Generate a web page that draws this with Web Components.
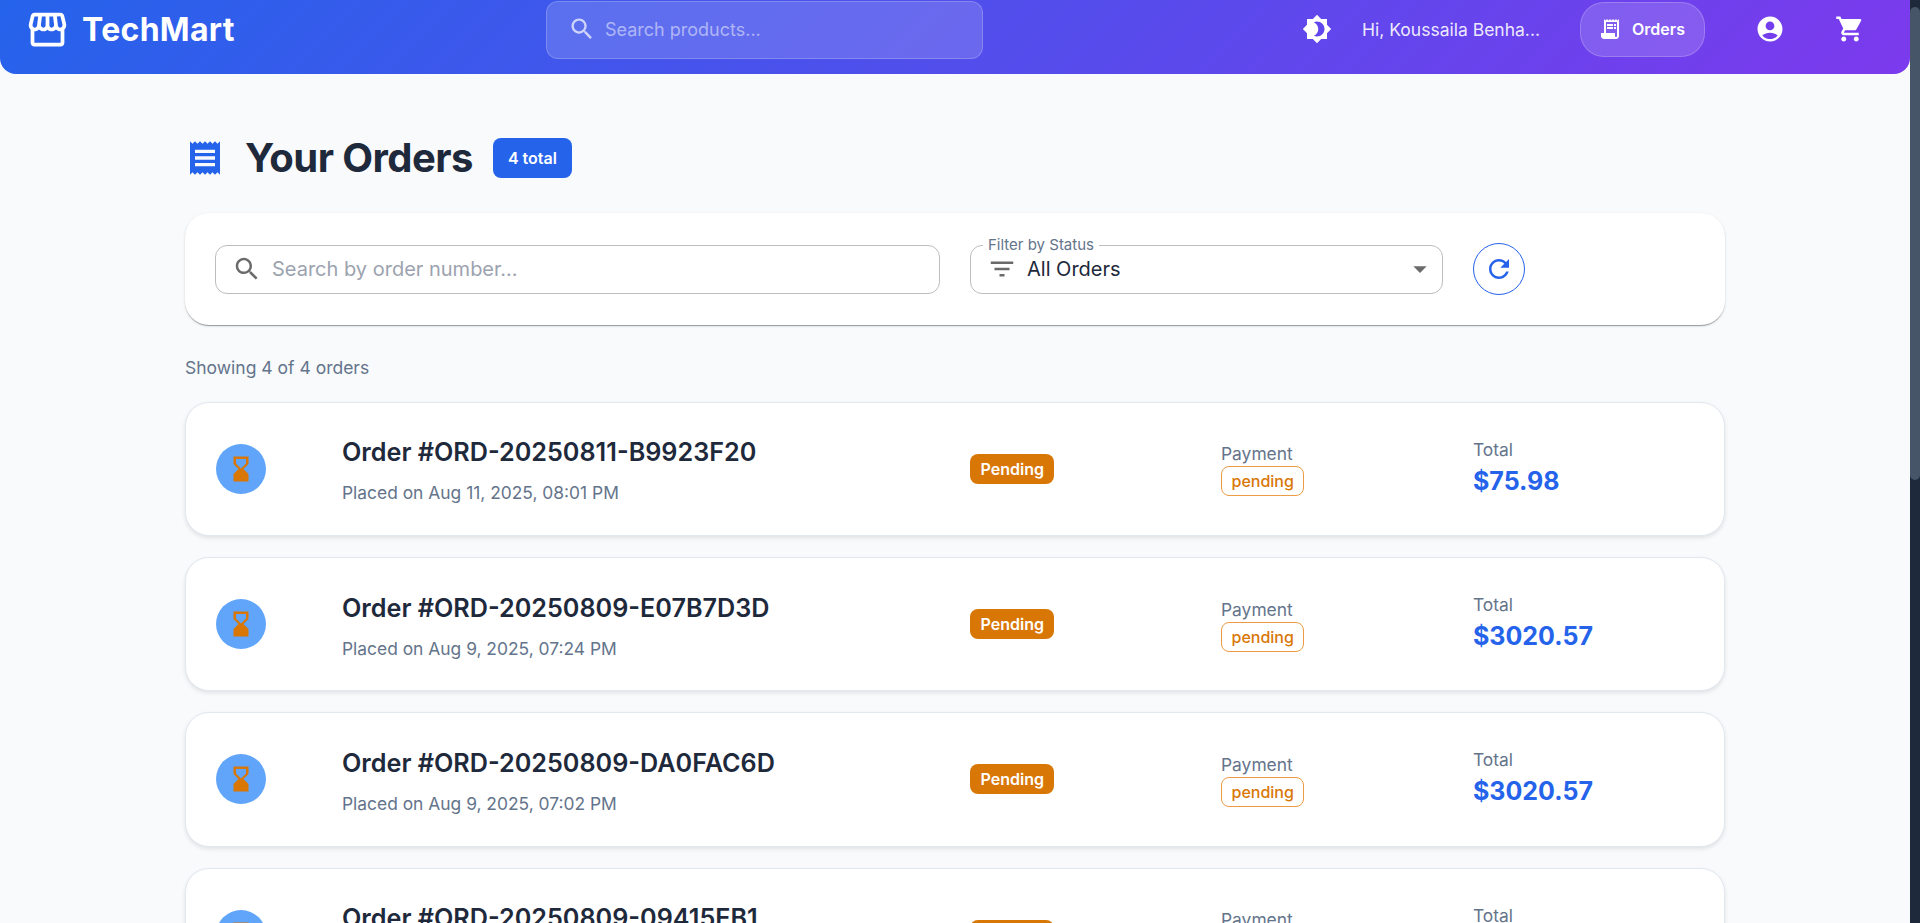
<!DOCTYPE html>
<html>
<head>
<meta charset="utf-8">
<title>TechMart</title>
<style>
  html, body { margin: 0; height: 100%; overflow: hidden; }
  body { display: flex; background: #f8fafc; font-family: Inter, "Liberation Sans", sans-serif; color: #1e293b; }
</style>
</head>
<body>
<app-page>
  <app-navbar></app-navbar>
  <orders-view>
    <order-row number="ORD-20250811-B9923F20" placed="Aug 11, 2025, 08:01 PM" total="$75.98"></order-row>
    <order-row number="ORD-20250809-E07B7D3D" placed="Aug 9, 2025, 07:24 PM" total="$3020.57"></order-row>
    <order-row number="ORD-20250809-DA0FAC6D" placed="Aug 9, 2025, 07:02 PM" total="$3020.57"></order-row>
    <order-row number="ORD-20250809-09415EB1" placed="Aug 9, 2025, 06:48 PM" total="$3020.57"></order-row>
  </orders-view>
</app-page>
<page-scrollbar></page-scrollbar>

<script>
class AppPage extends HTMLElement {
  constructor() {
    super();
    this.attachShadow({ mode: "open" });
    this.shadowRoot.innerHTML = `
      <style>
        :host { display: flex; flex-direction: column; flex: 1; min-width: 0; height: 100%; overflow: hidden; }
      </style>
      <slot></slot>
    `;
  }
}

class PageScrollbar extends HTMLElement {
  constructor() {
    super();
    this.attachShadow({ mode: "open" });
    this.shadowRoot.innerHTML = `
      <style>
        :host { display: block; width: 10px; height: 100%; background: #1e293b; flex: none; }
        .thumb { height: 473px; margin-top: 7px; background: #475569; border-radius: 5px; }
      </style>
      <div class="thumb"></div>
    `;
  }
}

class AppNavbar extends HTMLElement {
  constructor() {
    super();
    this.attachShadow({ mode: "open" });
    this.shadowRoot.innerHTML = `
      <style>
        :host {
          display: flex;
          align-items: center;
          flex: none;
          height: 74px;
          box-sizing: border-box;
          padding: 0 45px 16px 25px;
          color: #fff;
          background: linear-gradient(135deg, #2563eb 0%, #7c3aed 100%);
          border-radius: 0 0 16px 16px;
        }
        .brand { display: flex; align-items: center; gap: 12px; width: 521px; flex: none; }
        .brand span { font-size: 32px; font-weight: 700; letter-spacing: .3px; }
        .search {
          display: flex; align-items: center; gap: 9px;
          width: 437px; height: 58px; box-sizing: border-box;
          margin-top: 2px; padding: 0 14px 2px 21px; flex: none;
          background: rgba(255,255,255,.15);
          border: 1px solid rgba(255,255,255,.2);
          border-radius: 12px;
          color: rgba(255,255,255,.5);
          font-size: 18px;
        }
        .search svg { flex: none; color: rgba(255,255,255,.7); }
        .right { display: flex; align-items: center; margin-left: auto; }
        .theme { margin-right: 30px; }
        .hi { font-size: 17.5px; color: rgba(255,255,255,.9); margin-right: 40px; white-space: nowrap; }
        .orders {
          display: flex; align-items: center; gap: 10px;
          width: 125px; height: 55px; box-sizing: border-box;
          justify-content: center; padding-right: 2px;
          background: rgba(255,255,255,.15);
          border: 1px solid rgba(255,255,255,.2);
          border-radius: 24px;
          font-size: 16px; font-weight: 600;
          margin-right: 50px;
        }
        .user { margin-right: 50px; }
        svg { display: block; fill: currentColor; }
      </style>
      <div class="brand">
        <svg width="45" height="45" viewBox="0 0 24 24"><path d="M21.9 8.89l-1.05-4.37c-.22-.9-1-1.52-1.91-1.52H5.05c-.9 0-1.69.63-1.9 1.52L2.1 8.89c-.24 1.02-.02 2.06.62 2.88.08.11.19.19.28.29V19c0 1.1.9 2 2 2h14c1.1 0 2-.9 2-2v-6.94c.09-.09.2-.18.28-.28.64-.82.87-1.87.62-2.89zm-2.99-3.9l1.05 4.37c.1.42.01.84-.25 1.17-.14.18-.44.47-.94.47-.61 0-1.14-.49-1.21-1.14L16.98 5l1.93-.01zM13 5h1.96l.54 4.52c.05.39-.07.78-.33 1.07-.22.26-.54.41-.95.41-.67 0-1.22-.59-1.22-1.31V5zM8.49 9.52L9.04 5H11v4.69c0 .72-.55 1.31-1.29 1.31-.34 0-.65-.15-.89-.41-.25-.29-.37-.68-.33-1.07zm-4.45-.16L5.05 5h1.97l-.58 4.86c-.08.65-.6 1.14-1.21 1.14-.49 0-.8-.29-.93-.47-.27-.32-.36-.75-.26-1.17zM5 19v-6.03c.08.01.15.03.23.03.87 0 1.66-.36 2.24-.95.6.6 1.4.95 2.31.95.87 0 1.65-.36 2.23-.93.59.57 1.39.93 2.29.93.84 0 1.64-.35 2.24-.95.58.59 1.37.95 2.24.95.08 0 .15-.02.23-.03V19H5z"/></svg>
        <span>TechMart</span>
      </div>
      <div class="search">
        <svg width="28" height="28" viewBox="0 0 24 24"><path d="M15.5 14h-.79l-.28-.27C15.41 12.59 16 11.11 16 9.5 16 5.91 13.09 3 9.5 3S3 5.91 3 9.5 5.91 16 9.5 16c1.61 0 3.09-.59 4.23-1.57l.27.28v.79l5 4.99L20.49 19l-4.99-5zm-6 0C7.01 14 5 11.99 5 9.5S7.01 5 9.5 5 14 7.01 14 9.5 11.99 14 9.5 14z"/></svg>
        <span>Search products...</span>
      </div>
      <div class="right">
        <svg class="theme" width="30" height="30" viewBox="0 0 24 24"><path d="M20 8.69V4h-4.69L12 .69 8.69 4H4v4.69L.69 12 4 15.31V20h4.69L12 23.31 15.31 20H20v-4.69L23.31 12 20 8.69zM12 18c-.89 0-1.74-.2-2.5-.55C11.56 16.5 13 14.42 13 12s-1.44-4.5-3.5-5.45C10.26 6.2 11.11 6 12 6c3.31 0 6 2.69 6 6s-2.69 6-6 6z"/></svg>
        <span class="hi">Hi, Koussaila Benha...</span>
        <div class="orders">
          <svg width="24" height="24" viewBox="0 0 24 24"><path d="M19.5 3.5L18 2l-1.5 1.5L15 2l-1.5 1.5L12 2l-1.5 1.5L9 2 7.5 3.5 6 2v14H3v3c0 1.66 1.34 3 3 3h12c1.66 0 3-1.34 3-3V2l-1.5 1.5zM19 19c0 .55-.45 1-1 1s-1-.45-1-1v-3H8V5h11v14z"/><path d="M9 7h6v2H9zM16 7h2v2h-2zM9 10h6v2H9zM16 10h2v2h-2z"/></svg>
          <span>Orders</span>
        </div>
        <svg class="user" width="30" height="30" viewBox="0 0 24 24"><path d="M12 2C6.48 2 2 6.48 2 12s4.48 10 10 10 10-4.48 10-10S17.52 2 12 2zm0 4c1.93 0 3.5 1.57 3.5 3.5S13.93 13 12 13s-3.5-1.57-3.5-3.5S10.07 6 12 6zm0 14c-2.03 0-4.43-.82-6.14-2.88C7.55 15.8 9.68 15 12 15s4.45.8 6.14 2.12C16.43 19.18 14.03 20 12 20z"/></svg>
        <svg width="30" height="30" viewBox="0 0 24 24"><path d="M7 18c-1.1 0-1.99.9-1.99 2S5.9 22 7 22s2-.9 2-2-.9-2-2-2zM1 2v2h2l3.6 7.59-1.35 2.45c-.16.28-.25.61-.25.96 0 1.1.9 2 2 2h12v-2H7.42c-.14 0-.25-.11-.25-.25l.03-.12.9-1.63h7.45c.75 0 1.41-.41 1.75-1.03l3.58-6.49c.08-.14.12-.31.12-.48 0-.55-.45-1-1-1H5.21l-.94-2H1zm16 16c-1.1 0-1.99.9-1.99 2s.89 2 1.99 2 2-.9 2-2-.9-2-2-2z"/></svg>
      </div>
    `;
  }
}

class OrdersView extends HTMLElement {
  constructor() {
    super();
    this.attachShadow({ mode: "open" });
    this.shadowRoot.innerHTML = `
      <style>
        :host { display: block; padding: 60px 185px 0; box-sizing: border-box; }
        .title { display: flex; align-items: center; height: 48px; margin-bottom: 31px; }
        .title svg { color: #2563eb; fill: currentColor; flex: none; margin-right: 20px; }
        h1 { margin: 0 20px 0 0; font-size: 40px; line-height: 48px; font-weight: 700; color: #1e293b; letter-spacing: -0.55px; }
        .count { background: #2563eb; color: #fff; font-size: 16px; font-weight: 600; border-radius: 8px; padding: 0 15px; height: 40px; line-height: 40px; }
        .filters {
          display: flex; align-items: center;
          height: 112px; box-sizing: border-box;
          padding: 0 30px;
          background: #fff;
          border-radius: 24px;
          box-shadow: 0 2px 1px -1px rgba(0,0,0,.22), 0 1px 1px rgba(0,0,0,.14), 0 1px 3px rgba(0,0,0,.12);
        }
        .box {
          position: relative;
          display: flex; align-items: center;
          box-sizing: border-box;
          height: 49px;
          border: 1px solid #bdbdc0;
          border-radius: 12px;
          font-size: 20px;
        }
        .find { width: 725px; padding-left: 16px; gap: 10px; color: #9ca3af; margin-right: 30px; }
        .pick { width: 473px; padding: 0 6px 0 16px; gap: 10px; color: #1e293b; margin-right: 30px; }
        .box svg { fill: #6b6b6b; flex: none; display: block; }
        .legend {
          position: absolute; left: 12px; top: -10px;
          background: #fff; padding: 0 5px;
          font-size: 15px; line-height: 18px; color: #64748b;
        }
        .caret { margin-left: auto; }
        .refresh {
          width: 52px; height: 52px; box-sizing: border-box;
          border: 1px solid #2563eb; border-radius: 50%;
          display: flex; align-items: center; justify-content: center;
        }
        .refresh svg { fill: #2563eb; display: block; }
        .shown { margin: 30px 0 20.5px; font-size: 17.5px; line-height: 26px; color: #64748b; }
        .list { display: flex; flex-direction: column; gap: 21px; }
      </style>
      <div class="title">
        <svg width="40" height="40" viewBox="0 0 24 24"><path d="M18 17H6v-2h12v2zm0-4H6v-2h12v2zm0-4H6V7h12v2zM3 22l1.5-1.5L6 22l1.5-1.5L9 22l1.5-1.5L12 22l1.5-1.5L15 22l1.5-1.5L18 22l1.5-1.5L21 22V2l-1.5 1.5L18 2l-1.5 1.5L15 2l-1.5 1.5L12 2l-1.5 1.5L9 2 7.5 3.5 6 2 4.5 3.5 3 2v20z"/></svg>
        <h1>Your Orders</h1>
        <span class="count">4 total</span>
      </div>
      <div class="filters">
        <div class="box find">
          <svg width="30" height="30" viewBox="0 0 24 24"><path d="M15.5 14h-.79l-.28-.27C15.41 12.59 16 11.11 16 9.5 16 5.91 13.09 3 9.5 3S3 5.91 3 9.5 5.91 16 9.5 16c1.61 0 3.09-.59 4.23-1.57l.27.28v.79l5 4.99L20.49 19l-4.99-5zm-6 0C7.01 14 5 11.99 5 9.5S7.01 5 9.5 5 14 7.01 14 9.5 11.99 14 9.5 14z"/></svg>
          <span>Search by order number...</span>
        </div>
        <div class="box pick">
          <span class="legend">Filter by Status</span>
          <svg width="30" height="30" viewBox="0 0 24 24"><path d="M10 18h4v-2h-4v2zM3 6v2h18V6H3zm3 7h12v-2H6v2z"/></svg>
          <span>All Orders</span>
          <svg class="caret" width="32" height="32" viewBox="0 0 24 24"><path d="M7 10l5 5 5-5z"/></svg>
        </div>
        <div class="refresh">
          <svg width="30" height="30" viewBox="0 0 24 24"><path d="M17.65 6.35C16.2 4.9 14.21 4 12 4c-4.42 0-7.99 3.58-7.99 8s3.57 8 7.99 8c3.73 0 6.84-2.55 7.73-6h-2.08c-.82 2.33-3.04 4-5.65 4-3.31 0-6-2.69-6-6s2.69-6 6-6c1.66 0 3.14.69 4.22 1.78L13 11h7V4l-2.35 2.35z"/></svg>
        </div>
      </div>
      <div class="shown">Showing 4 of 4 orders</div>
      <div class="list"><slot></slot></div>
    `;
  }
}

class OrderRow extends HTMLElement {
  constructor() {
    super();
    this.attachShadow({ mode: "open" });
  }

  connectedCallback() {
    this.shadowRoot.innerHTML = `
      <style>
        :host {
          display: grid;
          grid-template-columns: 126px 628px 251px 1fr;
          align-items: center;
          height: 134.4px;
          box-sizing: border-box;
          padding: 0 30px;
          background: #fff;
          border: 1px solid #e2e8f0;
          border-radius: 24px;
          box-shadow: 0 2px 4px rgba(0,0,0,.1);
        }
        .dot {
          width: 50px; height: 50px; border-radius: 50%;
          background: #60a5fa; color: #d97706;
          display: flex; align-items: center; justify-content: center;
        }
        .dot svg { fill: currentColor; display: block; }
        .info { margin-top: 6px; }
        .name { font-size: 25.2px; line-height: 30px; font-weight: 600; color: #1e293b; }
        .placed { margin-top: 13px; font-size: 17.4px; line-height: 26px; color: #64748b; }
        .status {
          display: block; width: fit-content; background: #d97706; color: #fff;
          font-size: 16px; font-weight: 600; line-height: 30px; height: 30px;
          padding: 0 10.5px; border-radius: 8px;
        }
        .label { font-size: 17.4px; line-height: 20px; color: #64748b; }
        .pay { margin-top: 3px; }
        .pill {
          display: block; width: fit-content; box-sizing: border-box;
          height: 30px; line-height: 28px; margin-top: 2px; padding: 0 9.5px;
          border: 1px solid #ed9c45; border-radius: 8px;
          color: #d97706; font-size: 16px; font-weight: 500;
        }
        .total { margin-top: -3px; }
        .total .label { line-height: 21px; }
        .amount { margin-top: 6px; font-size: 25px; line-height: 30px; font-weight: 700; color: #2563eb; }
      </style>
      <div class="dot">
        <svg width="30" height="30" viewBox="0 0 24 24"><path d="M18 22l-.01-6L14 12l3.99-4.01L18 2H6v6l4 4-4 3.99V22h12zM8 7.5V4h8v3.5l-4 4-4-4z"/></svg>
      </div>
      <div class="info">
        <div class="name">Order #${this.getAttribute("number")}</div>
        <div class="placed">Placed on ${this.getAttribute("placed")}</div>
      </div>
      <div><span class="status">Pending</span></div>
      <div style="display:grid;grid-template-columns:252px 1fr;align-items:center">
        <div class="pay"><div class="label">Payment</div><span class="pill">pending</span></div>
        <div class="total"><div class="label">Total</div><div class="amount">${this.getAttribute("total")}</div></div>
      </div>
    `;
  }
}

customElements.define("app-page", AppPage);
customElements.define("page-scrollbar", PageScrollbar);
customElements.define("app-navbar", AppNavbar);
customElements.define("orders-view", OrdersView);
customElements.define("order-row", OrderRow);
</script>
</body>
</html>
